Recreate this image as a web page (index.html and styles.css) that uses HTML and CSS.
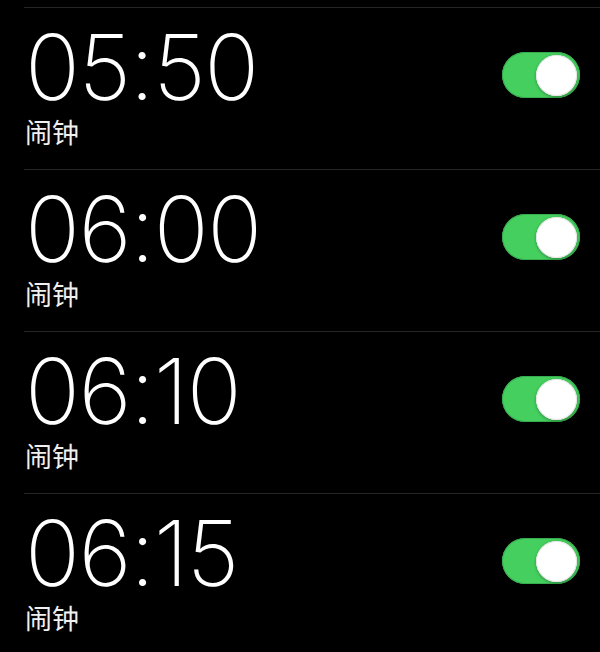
FILE: index.html
```html
<!DOCTYPE html>
<html lang="zh-CN">
<head>
<meta charset="utf-8">
<title>闹钟</title>
<link rel="stylesheet" href="styles.css">
</head>
<body>
<ul class="alarms">
  <li class="alarm">
    <div class="info">
      <div class="time">05:50</div>
      <div class="label">闹钟</div>
    </div>
    <div class="switch on"><span class="knob"></span></div>
  </li>
  <li class="alarm">
    <div class="info">
      <div class="time">06:00</div>
      <div class="label">闹钟</div>
    </div>
    <div class="switch on"><span class="knob"></span></div>
  </li>
  <li class="alarm">
    <div class="info">
      <div class="time">06:10</div>
      <div class="label">闹钟</div>
    </div>
    <div class="switch on"><span class="knob"></span></div>
  </li>
  <li class="alarm">
    <div class="info">
      <div class="time">06:15</div>
      <div class="label">闹钟</div>
    </div>
    <div class="switch on"><span class="knob"></span></div>
  </li>
</ul>
</body>
</html>
```

FILE: styles.css
```css
html, body {
  margin: 0;
  padding: 0;
  background: #000;
}
body {
  width: 600px;
  height: 652px;
  overflow: hidden;
  color: #fff;
  font-family: Inter, "Noto Sans CJK SC", sans-serif;
}
.alarms {
  list-style: none;
  margin: 7px 0 0 0;
  padding: 0;
}
.alarm {
  margin-left: 24px;
  border-top: 1px solid #262626;
  height: 161px;
  display: flex;
  justify-content: space-between;
  align-items: flex-start;
  padding-right: 20px;
}
.info {
  padding-top: 19px;
  padding-left: 1px;
}
.time {
  font-family: Inter, "Roboto", sans-serif;
  font-weight: 200;
  font-size: 91px;
  line-height: 80px;
  letter-spacing: -1.5px;
}
.label {
  margin-top: 9px;
  font-family: "Noto Sans CJK SC", sans-serif;
  font-size: 27px;
  line-height: 32px;
  color: #f0f0f0;
}
.switch {
  margin-top: 44px;
  width: 78px;
  height: 46px;
  border-radius: 23px;
  background: #44cf5e;
  box-sizing: border-box;
  display: flex;
  align-items: center;
  justify-content: flex-end;
  padding-right: 3px;
  box-shadow: inset 0 0 0 1px #38ad4f;
}
.knob {
  width: 41px;
  height: 41px;
  border-radius: 50%;
  background: #fff;
  box-shadow: 0 1px 3px rgba(0, 0, 0, 0.35), inset 0 0 0 1px #e4e4e4;
}
```
